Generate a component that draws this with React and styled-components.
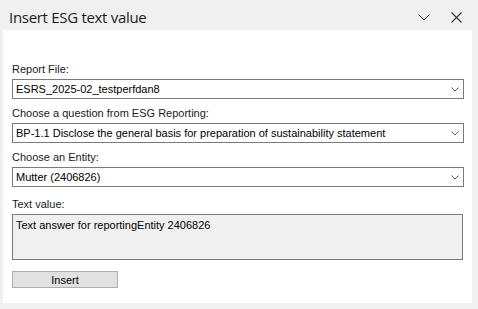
import React from "react";
import styled, { createGlobalStyle } from "styled-components";

const GlobalStyle = createGlobalStyle`
    html, body {
        margin: 0;
        padding: 0;
        background: #f0f0f0;
    }
    body {
        width: 478px;
        height: 309px;
        overflow: hidden;
        font-family: "Liberation Sans", Arial, sans-serif;
    }
`;

const Pane = styled.div`
    width: 478px;
    height: 309px;
    display: flex;
    flex-direction: column;
    background: #f0f0f0;
`;

const TitleBar = styled.div`
    height: 30px;
    display: flex;
    align-items: center;
    padding: 0 10px 0 9px;
    box-sizing: border-box;
`;

const Title = styled.div`
    flex: 1;
    font-family: "Open Sans", "Noto Sans", sans-serif;
    font-size: 15px;
    color: #1c1c1c;
    letter-spacing: -0.3px;
    margin-top: 3px;
`;

const TitleButton = styled.span`
    width: 24px;
    height: 20px;
    display: flex;
    align-items: center;
    justify-content: center;
    margin-left: ${p => p.gap || 0}px;
    margin-top: 4px;
`;

const Body = styled.div`
    margin: 0 6px 6px 3px;
    flex: 1;
    background: #fff;
    padding: 32px 8px 0 9px;
    display: flex;
    flex-direction: column;
`;

const Label = styled.div`
    height: 14px;
    line-height: 14px;
    font-size: 11px;
    color: #1a1a1a;
    margin-top: ${p => p.top || 0}px;
    margin-bottom: 3px;
`;

const Combo = styled.div`
    height: 20px;
    box-sizing: border-box;
    border: 1px solid #7a7a7a;
    display: flex;
    align-items: center;
    padding: 0 4px 0 3px;
    font-size: 11px;
    color: #000;
`;

const ComboText = styled.span`
    flex: 1;
    white-space: nowrap;
    overflow: hidden;
`;

const TextBox = styled.div`
    height: 46px;
    width: calc(100% - 1px);
    box-sizing: border-box;
    border: 1px solid #7a7a7a;
    background: #f0f0f0;
    padding: 3px 3px 0 3px;
    font-size: 11px;
    line-height: 14px;
    color: #000;
`;

const Button = styled.button`
    margin-top: 11px;
    width: 106px;
    height: 17px;
    box-sizing: border-box;
    border: 1px solid #adadad;
    background: #e1e1e1;
    font-family: "Liberation Sans", Arial, sans-serif;
    font-size: 11px;
    color: #000;
    padding: 0;
    line-height: 14px;
`;

const SmallChevron = () => (
    <svg width="8" height="5" viewBox="0 0 8 5">
        <path d="M0.5 0.5 L4 4 L7.5 0.5" fill="none" stroke="#606060" strokeWidth="1" />
    </svg>
);

const Field = ({ label, value, top }) => (
    <>
        <Label top={top}>{label}</Label>
        <Combo>
            <ComboText>{value}</ComboText>
            <SmallChevron />
        </Combo>
    </>
);

export default function App() {
    return (
        <Pane>
            <GlobalStyle />
            <TitleBar>
                <Title>Insert ESG text value</Title>
                <TitleButton>
                    <svg width="12" height="7" viewBox="0 0 12 7">
                        <path d="M0.5 0.5 L6 6 L11.5 0.5" fill="none" stroke="#333" strokeWidth="1" />
                    </svg>
                </TitleButton>
                <TitleButton gap={8}>
                    <svg width="11" height="11" viewBox="0 0 11 11">
                        <path d="M0.5 0.5 L10.5 10.5 M10.5 0.5 L0.5 10.5" fill="none" stroke="#333" strokeWidth="1.1" />
                    </svg>
                </TitleButton>
            </TitleBar>
            <Body>
                <Field label="Report File:" value="ESRS_2025-02_testperfdan8" />
                <Field
                    top={7}
                    label="Choose a question from ESG Reporting:"
                    value="BP-1.1 Disclose the general basis for preparation of sustainability statement"
                />
                <Field top={7} label="Choose an Entity:" value="Mutter (2406826)" />
                <Label top={10}>Text value:</Label>
                <TextBox>Text answer for reportingEntity 2406826</TextBox>
                <div>
                    <Button>Insert</Button>
                </div>
            </Body>
        </Pane>
    );
}
